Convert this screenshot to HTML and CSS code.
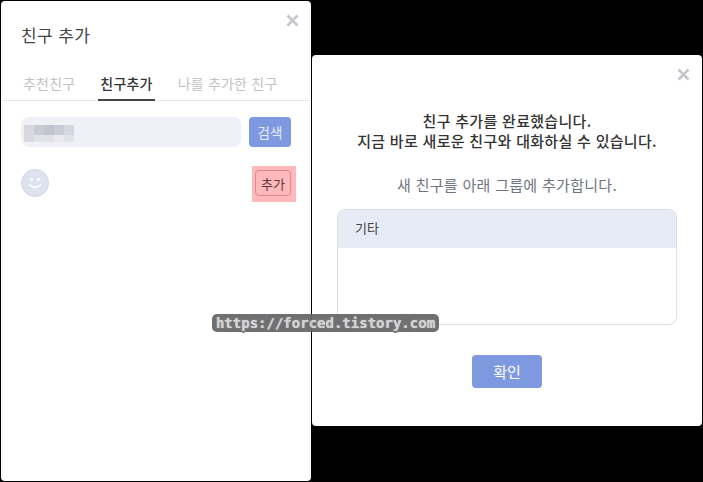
FILE: index.html
```html
<!DOCTYPE html>
<html lang="ko">
<head>
<meta charset="utf-8">
<title>친구 추가</title>
<link rel="stylesheet" href="styles.css">
</head>
<body>
<section class="panel panel-left">
  <button class="close close-left" aria-label="닫기"><svg width="13" height="13" viewBox="0 0 13 13"><path d="M1.5 1.5l10 10M11.5 1.5l-10 10"/></svg></button>
  <h1 class="title">친구 추가</h1>
  <nav class="tabs">
    <span class="tab">추천친구</span>
    <span class="tab tab-active">친구추가</span>
    <span class="tab">나를 추가한 친구</span>
  </nav>
  <div class="search">
    <div class="search-input">
      <div class="mosaic">
        <i class="m1"></i><i class="m2"></i><i class="m3"></i><i class="m2"></i><i class="m4"></i>
        <i class="m5"></i><i class="m6"></i><i class="m6"></i><i class="m7"></i><i class="m6"></i>
      </div>
    </div>
    <button class="btn-search">검색</button>
  </div>
  <div class="friend">
    <div class="avatar"><svg width="26" height="26" viewBox="0 0 26 26"><circle cx="9.500" cy="9.500" r="1.400"/><circle cx="16.500" cy="9.500" r="1.400"/><path d="M7.500 14.500c1.800 3.600 9.200 3.600 11 0"/></svg></div>
    <div class="highlight"><button class="btn-add">추가</button></div>
  </div>
</section>
<section class="panel panel-right">
  <button class="close close-right" aria-label="닫기"><svg width="13" height="13" viewBox="0 0 13 13"><path d="M1.500 1.500l10 10M11.500 1.500l-10 10"/></svg></button>
  <p class="done">친구 추가를 완료했습니다.<br>지금 바로 새로운 친구와 대화하실 수 있습니다.</p>
  <p class="hint">새 친구를 아래 그룹에 추가합니다.</p>
  <div class="groups"><div class="group">기타</div></div>
  <button class="btn-ok">확인</button>
</section>
<div class="watermark">https://forced.tistory.com</div>
</body>
</html>
```
FILE: styles.css
```css
* { box-sizing: border-box; }
html, body { margin: 0; height: 100%; }
body {
  position: relative;
  width: 703px;
  height: 482px;
  overflow: hidden;
  background: #000;
  display: flex;
  align-items: flex-start;
  padding: 1px;
  font-family: "Noto Sans CJK KR", "Noto Sans", sans-serif;
  color: #333;
}
button { font-family: inherit; padding: 0; border: 0; }
.panel { position: relative; background: #fff; border-radius: 4px; }
.panel-left { width: 310px; height: 480px; }
.panel-right {
  width: 390px;
  height: 371px;
  margin: 54px 0 0 1px;
  display: flex;
  flex-direction: column;
  align-items: center;
}
.close { position: absolute; background: none; width: 13px; height: 13px; display: block; }
.close svg { display: block; }
.close path { stroke: #c4c6cb; stroke-width: 2.6; fill: none; }
.close-left { top: 13px; right: 12px; }
.close-right { top: 13px; right: 12px; }
.title {
  margin: 0;
  padding: 22px 0 0 20px;
  font-size: 17px;
  line-height: 24px;
  font-weight: 400;
  letter-spacing: 0.4px;
  color: #444;
}
.tabs {
  display: flex;
  gap: 22px;
  margin-top: 26px;
  padding-left: 21px;
  height: 28px;
  border-bottom: 1px solid #e8e8ea;
}
.tab {
  padding: 0 1px;
  height: 27px;
  font-size: 14px;
  line-height: 20px;
  letter-spacing: 0.2px;
  color: #c2c2c2;
  white-space: nowrap;
}
.tab-active {
  padding: 0 2px;
  font-weight: 500;
  color: #333;
  height: 28px;
  border-bottom: 2px solid #444;
}
.search { display: flex; gap: 8px; margin: 16px 0 0 20px; }
.search-input {
  width: 220px;
  height: 30px;
  background: #eff1f6;
  border-radius: 8px;
  padding: 8px 0 0 3px;
}
.mosaic { display: grid; grid-template-columns: repeat(5, 10px); grid-template-rows: 10px 7px; }
.m1 { background: #d8d8de; }
.m2 { background: #c9cad4; }
.m3 { background: #c2c3ce; }
.m4 { background: #d2d7e0; }
.m5 { background: #d9d9e0; }
.m6 { background: #e1e2ea; }
.m7 { background: #e9e9ef; }
.btn-search {
  width: 42px;
  height: 30px;
  border-radius: 4px;
  background: #7f99e0;
  color: #e8edfa;
  font-size: 13.500px;
}
.friend {
  display: flex;
  justify-content: space-between;
  align-items: flex-start;
  margin: 19px 15px 0 20px;
}
.avatar {
  width: 28px;
  height: 28px;
  margin-top: 3px;
  border-radius: 50%;
  background: #dfe3ef;
  border: 1px solid #cfd5e6;
}
.avatar svg { display: block; }
.avatar circle { fill: #fff; }
.avatar path { stroke: #fff; stroke-width: 1.6; fill: none; stroke-linecap: round; }
.highlight { background: #ffb9bb; padding: 4px 5px 6px 3px; }
.btn-add {
  display: block;
  width: 36px;
  height: 26px;
  border: 1px solid #d68b90;
  border-radius: 4px;
  background: transparent;
  color: #5a3a3c;
  font-size: 13px;
}
.done {
  margin: 56px 0 0;
  font-size: 15px;
  line-height: 20px;
  font-weight: 500;
  letter-spacing: 0.3px;
  text-align: center;
  color: #333;
}
.hint {
  margin: 24px 0 0;
  font-size: 15px;
  line-height: 20px;
  letter-spacing: 0.3px;
  color: #6f7480;
}
.groups {
  width: 340px;
  height: 116px;
  margin-top: 14px;
  border: 1px solid #dcdee3;
  border-radius: 8px;
  overflow: hidden;
}
.group {
  height: 38px;
  background: #e7ebf6;
  padding-left: 17px;
  font-size: 13px;
  line-height: 35px;
  color: #444;
}
.btn-ok {
  width: 70px;
  height: 33px;
  margin-top: 30px;
  border-radius: 4px;
  background: #7f99e0;
  color: #fff;
  font-size: 15px;
}
.watermark {
  position: absolute;
  left: 212px;
  top: 314px;
  width: 227px;
  height: 18px;
  border-radius: 5px;
  background: #666668;
  opacity: 0.93;
  color: #d0d0d0;
  font-family: "DejaVu Sans Mono", monospace;
  font-size: 14px;
  font-weight: 700;
  line-height: 18px;
  text-align: center;
  white-space: nowrap;
  text-shadow: 0 0 1px #d0d0d0, 0 2px 0 #666668, 0 -2px 0 #666668;
}
```
